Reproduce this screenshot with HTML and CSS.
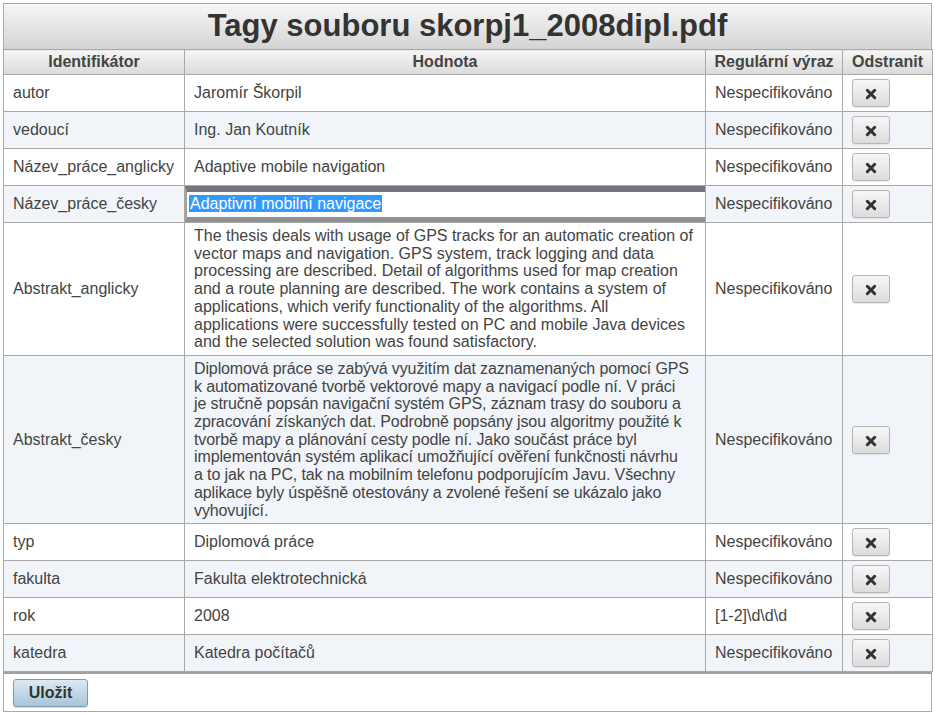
FILE: index.html
```html
<!DOCTYPE html>
<html lang="cs">
<head>
<meta charset="utf-8">
<title>Tagy souboru</title>
<link rel="stylesheet" href="styles.css">
</head>
<body>
<div class="panel">
  <div class="title">Tagy souboru skorpj1_2008dipl.pdf</div>
  <table class="tags">
    <colgroup>
      <col class="c-id"><col class="c-val"><col class="c-re"><col class="c-del">
    </colgroup>
    <thead>
      <tr><th>Identifikátor</th><th>Hodnota</th><th>Regulární výraz</th><th>Odstranit</th></tr>
    </thead>
    <tbody>
      <tr><td>autor</td><td class="val">Jaromír Škorpil</td><td>Nespecifikováno</td><td><button class="del"><svg viewBox="0 0 12 12" width="12" height="12"><path d="M2.3 2.3L9.7 9.7M9.7 2.3L2.3 9.7" stroke="#333" stroke-width="3" stroke-linecap="round"/></svg></button></td></tr>
      <tr class="alt"><td>vedoucí</td><td class="val">Ing. Jan Koutník</td><td>Nespecifikováno</td><td><button class="del"><svg viewBox="0 0 12 12" width="12" height="12"><path d="M2.3 2.3L9.7 9.7M9.7 2.3L2.3 9.7" stroke="#333" stroke-width="3" stroke-linecap="round"/></svg></button></td></tr>
      <tr><td>Název_práce_anglicky</td><td class="val">Adaptive mobile navigation</td><td>Nespecifikováno</td><td><button class="del"><svg viewBox="0 0 12 12" width="12" height="12"><path d="M2.3 2.3L9.7 9.7M9.7 2.3L2.3 9.7" stroke="#333" stroke-width="3" stroke-linecap="round"/></svg></button></td></tr>
      <tr class="alt"><td>Název_práce_česky</td><td class="editcell"><div class="edit"><span class="sel">Adaptivní mobilní navigace</span></div></td><td>Nespecifikováno</td><td><button class="del"><svg viewBox="0 0 12 12" width="12" height="12"><path d="M2.3 2.3L9.7 9.7M9.7 2.3L2.3 9.7" stroke="#333" stroke-width="3" stroke-linecap="round"/></svg></button></td></tr>
      <tr><td>Abstrakt_anglicky</td><td class="val long">The thesis deals with usage of GPS tracks for an automatic creation of<br>vector maps and navigation. GPS system, track logging and data<br>processing are described. Detail of algorithms used for map creation<br>and a route planning are described. The work contains a system of<br>applications, which verify functionality of the algorithms. All<br>applications were successfully tested on PC and mobile Java devices<br>and the selected solution was found satisfactory.</td><td>Nespecifikováno</td><td><button class="del"><svg viewBox="0 0 12 12" width="12" height="12"><path d="M2.3 2.3L9.7 9.7M9.7 2.3L2.3 9.7" stroke="#333" stroke-width="3" stroke-linecap="round"/></svg></button></td></tr>
      <tr class="alt"><td>Abstrakt_česky</td><td class="val long cz">Diplomová práce se zabývá využitím dat zaznamenaných pomocí GPS<br>k automatizované tvorbě vektorové mapy a navigací podle ní. V práci<br>je stručně popsán navigační systém GPS, záznam trasy do souboru a<br>zpracování získaných dat. Podrobně popsány jsou algoritmy použité k<br>tvorbě mapy a plánování cesty podle ní. Jako součást práce byl<br>implementován systém aplikací umožňující ověření funkčnosti návrhu<br>a to jak na PC, tak na mobilním telefonu podporujícím Javu. Všechny<br>aplikace byly úspěšně otestovány a zvolené řešení se ukázalo jako<br>vyhovující.</td><td>Nespecifikováno</td><td><button class="del"><svg viewBox="0 0 12 12" width="12" height="12"><path d="M2.3 2.3L9.7 9.7M9.7 2.3L2.3 9.7" stroke="#333" stroke-width="3" stroke-linecap="round"/></svg></button></td></tr>
      <tr><td>typ</td><td class="val">Diplomová práce</td><td>Nespecifikováno</td><td><button class="del"><svg viewBox="0 0 12 12" width="12" height="12"><path d="M2.3 2.3L9.7 9.7M9.7 2.3L2.3 9.7" stroke="#333" stroke-width="3" stroke-linecap="round"/></svg></button></td></tr>
      <tr class="alt"><td>fakulta</td><td class="val">Fakulta elektrotechnická</td><td>Nespecifikováno</td><td><button class="del"><svg viewBox="0 0 12 12" width="12" height="12"><path d="M2.3 2.3L9.7 9.7M9.7 2.3L2.3 9.7" stroke="#333" stroke-width="3" stroke-linecap="round"/></svg></button></td></tr>
      <tr><td>rok</td><td class="val">2008</td><td>[1-2]\d\d\d</td><td><button class="del"><svg viewBox="0 0 12 12" width="12" height="12"><path d="M2.3 2.3L9.7 9.7M9.7 2.3L2.3 9.7" stroke="#333" stroke-width="3" stroke-linecap="round"/></svg></button></td></tr>
      <tr class="alt"><td>katedra</td><td class="val">Katedra počítačů</td><td>Nespecifikováno</td><td><button class="del"><svg viewBox="0 0 12 12" width="12" height="12"><path d="M2.3 2.3L9.7 9.7M9.7 2.3L2.3 9.7" stroke="#333" stroke-width="3" stroke-linecap="round"/></svg></button></td></tr>
    </tbody>
  </table>
  <div class="footer"><button class="save">Uložit</button></div>
</div>
</body>
</html>
```
FILE: styles.css
```css
html, body {
  margin: 0;
  padding: 0;
  background: #fff;
}
body {
  font-family: "Liberation Sans", Arial, sans-serif;
  font-size: 16px;
  color: #444;
}
.panel {
  margin: 3px;
  width: 929px;
}
.title {
  box-sizing: border-box;
  height: 46px;
  border: 1px solid #a9a9a9;
  border-bottom: none;
  background: linear-gradient(#f7f7f7, #d4d4d4);
  text-align: center;
  font-weight: bold;
  font-size: 31px;
  line-height: 44px;
  color: #333;
}
.tags {
  width: 929px;
  border-collapse: collapse;
  table-layout: fixed;
}
.c-id { width: 181px; }
.c-val { width: 521px; }
.c-re { width: 137px; }
.c-del { width: 90px; }
.tags th {
  height: 24px;
  padding: 0 4px;
  border: 1px solid #a9a9a9;
  background: linear-gradient(#f6f6f6, #dadada);
  font-weight: bold;
  color: #444;
  text-align: center;
  line-height: 18px;
}
.tags td {
  border: 1px solid #a9a9a9;
  padding: 4px 9px;
  vertical-align: middle;
  line-height: 17.7px;
  white-space: nowrap;
  overflow: hidden;
}
.tags td.long {
  padding: 4px 9px;
}
.tags td.cz {
  letter-spacing: -0.12px;
}
.tags tr.alt td { background: #f1f5fa; }
.tags td.editcell {
  padding: 0;
  background: #fff;
}
.tags tr.alt td.editcell { background: #fff; }
.edit {
  box-sizing: border-box;
  height: 36px;
  border-top: 6px solid #72767a;
  border-bottom: 5px solid #8d9094;
  border-left: 2px solid #9fa2a5;
  background: #fff;
  padding: 2px 0 0 2px;
  line-height: 20px;
}
.sel {
  background: #3399ff;
  color: #fff;
  padding: 0 1px;
}
.del {
  box-sizing: border-box;
  width: 38px;
  height: 28px;
  border: 1px solid #b5b5b5;
  border-radius: 3px;
  background: linear-gradient(#f7f7f7, #dcdcdc);
  padding: 0;
  display: flex;
  align-items: center;
  justify-content: center;
  box-shadow: 0 1px 1px rgba(0,0,0,0.08);
}
.del svg { display: block; margin-top: 2px; }
.footer {
  box-sizing: border-box;
  height: 40px;
  border: 1px solid #a9a9a9;
  border-top: 2px solid #a0a0a0;
  padding: 5px 9px;
}
.save {
  box-sizing: border-box;
  width: 75px;
  height: 28px;
  border: 1px solid #7c9bb1;
  border-radius: 3px;
  background: linear-gradient(#dde9f2, #a7c5da);
  font-family: "Liberation Sans", Arial, sans-serif;
  font-size: 16px;
  font-weight: bold;
  color: #333;
  padding: 0;
  box-shadow: 0 1px 1px rgba(0,0,0,0.15);
}
```
